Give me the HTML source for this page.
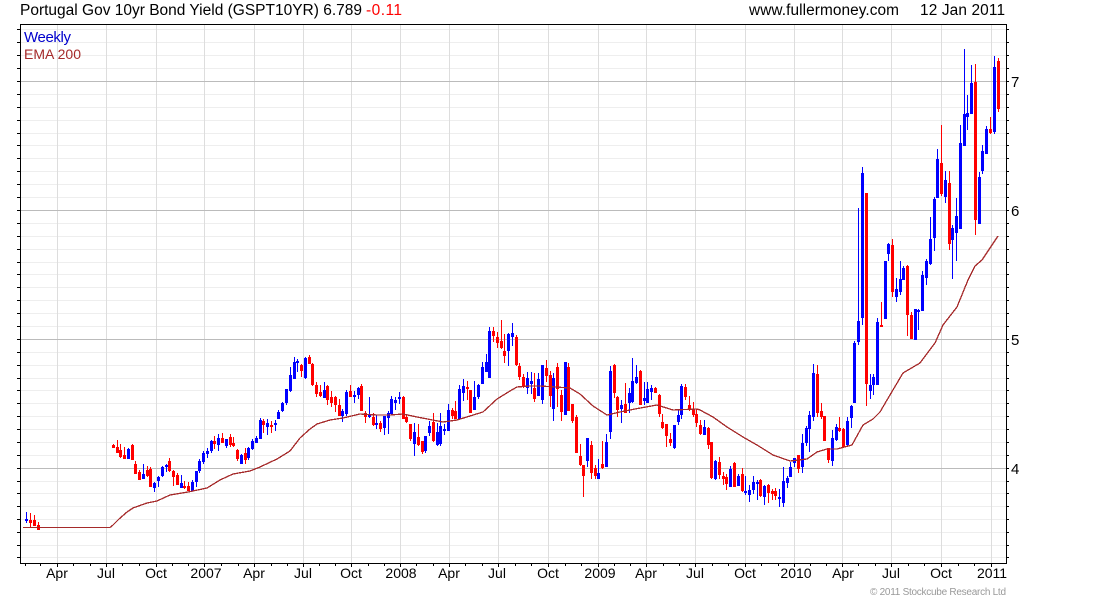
<!DOCTYPE html>
<html><head><meta charset="utf-8"><title>Portugal Gov 10yr Bond Yield</title>
<style>html,body{margin:0;padding:0;background:#fff;width:1100px;height:600px;overflow:hidden}svg{display:block}text{font-family:"Liberation Sans",Arial,sans-serif}</style></head>
<body>
<svg width="1100" height="600" viewBox="0 0 1100 600" xmlns="http://www.w3.org/2000/svg">
<g shape-rendering="crispEdges" fill="none">
<path stroke="#eeeeee" d="M20 29.5H1006M20 42.5H1006M20 55.5H1006M20 68.5H1006M20 94.5H1006M20 107.5H1006M20 120.5H1006M20 133.5H1006M20 145.5H1006M20 158.5H1006M20 171.5H1006M20 184.5H1006M20 197.5H1006M20 223.5H1006M20 236.5H1006M20 249.5H1006M20 262.5H1006M20 274.5H1006M20 287.5H1006M20 300.5H1006M20 313.5H1006M20 326.5H1006M20 352.5H1006M20 365.5H1006M20 378.5H1006M20 390.5H1006M20 403.5H1006M20 416.5H1006M20 429.5H1006M20 442.5H1006M20 455.5H1006M20 481.5H1006M20 493.5H1006M20 506.5H1006M20 519.5H1006M20 532.5H1006M20 545.5H1006M20 557.5H1006"/>
<path stroke="#dddddd" d="M57.5 25V563M106.5 25V563M156.5 25V563M204.5 25V563M254.5 25V563M303.5 25V563M351.5 25V563M400.5 25V563M449.5 25V563M498.5 25V563M548.5 25V563M598.5 25V563M646.5 25V563M695.5 25V563M745.5 25V563M794.5 25V563M842.5 25V563M891.5 25V563M941.5 25V563M991.5 25V563"/>
<path stroke="#bbbbbb" d="M20 81.5H1006M20 210.5H1006M20 339.5H1006M20 468.5H1006"/>
<path stroke="#0000ff" d="M26.5 512V523M128.5 448V459M143.5 464V479M154.5 482V492M158.5 476V487M162.5 466V477M166.5 464V472M181.5 475V488M192.5 480V491M196.5 471V487M199.5 459V473M203.5 451V464M207.5 448V458M211.5 440V453M218.5 434V451M226.5 439V448M241.5 454V464M248.5 447V460M252.5 439V450M256.5 436V443M260.5 418V439M267.5 419V435M275.5 420V431M278.5 410V419M282.5 402V412M286.5 389V405M290.5 367V392M294.5 357V379M297.5 359V372M305.5 357V379M324.5 382V398M342.5 409V422M346.5 390V416M354.5 391V403M358.5 387V399M369.5 397V418M376.5 415V429M384.5 416V435M388.5 411V434M391.5 396V415M395.5 397V410M399.5 392V404M414.5 423V456M425.5 436V453M429.5 421V436M437.5 423V446M440.5 413V446M444.5 424V435M448.5 404V431M459.5 385V420M463.5 379V401M474.5 381V410M478.5 384V399M482.5 362V384M486.5 354V372M489.5 327V378M508.5 333V366M512.5 323V346M527.5 372V394M531.5 372V394M538.5 373V396M542.5 365V404M553.5 373V421M565.5 362V415M587.5 438V467M598.5 459V479M606.5 434V467M610.5 366V439M621.5 400V423M629.5 388V413M632.5 358V403M636.5 365V384M644.5 382V405M647.5 382V403M651.5 385V400M674.5 425V449M678.5 409V425M681.5 384V419M704.5 420V435M715.5 460V480M730.5 466V487M738.5 474V486M745.5 476V495M749.5 485V502M753.5 476V494M757.5 480V500M764.5 485V505M779.5 489V507M783.5 467V507M787.5 476V488M790.5 462V477M794.5 458V467M802.5 434V473M806.5 426V446M809.5 411V452M813.5 364V421M832.5 430V466M836.5 424V441M847.5 417V446M851.5 405V428M854.5 341V403M858.5 208V345M862.5 167V325M870.5 374V399M873.5 374V395M877.5 318V385M885.5 261V319M888.5 243V261M896.5 278V302M900.5 261V295M903.5 266V280M915.5 309V340M918.5 309V330M922.5 271V311M926.5 259V285M930.5 217V265M934.5 197V251M937.5 149V198M945.5 171V203M952.5 225V279M956.5 198V261M960.5 125V229M964.5 49V146M967.5 95V130M971.5 65V114M979.5 172V224M982.5 145V174M986.5 126V154M994.5 56V134"/>
<path stroke="#0000ff" stroke-width="3" d="M26.5 519V521M128.5 449V459M143.5 474V479M154.5 483V488M158.5 477V481M162.5 467V476M166.5 465V467M181.5 483V488M192.5 482V491M196.5 471V482M199.5 461V471M203.5 453V462M207.5 451V454M211.5 441V451M218.5 438V445M226.5 439V446M241.5 455V464M248.5 448V458M252.5 441V449M256.5 438V443M260.5 420V439M267.5 423V427M275.5 423V425M278.5 412V419M282.5 403V411M286.5 389V403M290.5 375V391M294.5 362V379M297.5 361V363M305.5 358V378M324.5 390V398M342.5 411V416M346.5 392V414M354.5 395V397M358.5 388V395M369.5 415V417M376.5 423V425M384.5 416V428M388.5 413V418M391.5 399V414M395.5 400V403M399.5 397V399M414.5 432V444M425.5 436V451M429.5 426V433M437.5 432V445M440.5 426V444M444.5 429V431M448.5 410V431M459.5 389V419M463.5 386V393M474.5 397V410M478.5 385V397M482.5 367V384M486.5 362V372M489.5 331V378M508.5 334V351M512.5 333V337M527.5 378V388M531.5 381V384M538.5 379V396M542.5 365V400M553.5 378V409M565.5 362V415M587.5 438V461M598.5 473V479M606.5 442V467M610.5 371V432M621.5 405V409M629.5 393V403M632.5 381V402M636.5 377V383M644.5 398V401M647.5 389V403M651.5 388V392M674.5 425V448M678.5 415V422M681.5 386V415M704.5 427V435M715.5 461V479M730.5 469V487M738.5 476V486M745.5 491V493M749.5 490V495M753.5 482V490M757.5 482V484M764.5 486V497M779.5 497V499M783.5 481V503M787.5 478V483M790.5 467V477M794.5 458V463M802.5 443V467M806.5 428V443M809.5 415V429M813.5 373V417M832.5 438V461M836.5 427V440M847.5 421V445M851.5 406V418M854.5 343V403M858.5 321V342M862.5 173V318M870.5 385V391M873.5 377V385M877.5 322V385M885.5 261V319M888.5 244V254M896.5 289V297M900.5 279V292M903.5 268V280M915.5 309V340M918.5 310V312M922.5 275V311M926.5 261V278M930.5 239V264M934.5 199V238M937.5 159V198M945.5 180V197M952.5 228V240M956.5 216V233M960.5 143V229M964.5 114V146M967.5 113V117M971.5 83V114M979.5 177V224M982.5 151V171M986.5 129V154M994.5 67V132"/>
<path stroke="#ff0000" d="M30.5 513V527M34.5 515V526M38.5 522V530M113.5 444V448M117.5 440V453M120.5 444V458M124.5 447V459M132.5 444V460M135.5 461V474M139.5 470V480M147.5 466V477M150.5 467V487M169.5 458V472M173.5 470V486M177.5 473V485M184.5 481V489M188.5 482V491M214.5 436V449M222.5 433V443M230.5 434V447M233.5 437V447M237.5 449V461M245.5 448V464M263.5 419V433M271.5 421V433M301.5 364V377M309.5 355V364M312.5 363V386M316.5 382V397M320.5 385V397M327.5 385V405M331.5 391V407M335.5 396V412M339.5 399V416M350.5 385V397M361.5 384V411M365.5 411V423M373.5 413V426M380.5 421V432M403.5 396V419M406.5 415V423M410.5 424V441M418.5 424V446M422.5 441V454M433.5 413V442M452.5 408V419M455.5 401V419M467.5 381V400M470.5 390V413M493.5 327V342M497.5 332V348M501.5 320V349M504.5 334V363M516.5 335V366M519.5 363V380M523.5 374V388M534.5 373V402M546.5 360V382M550.5 371V407M557.5 363V407M561.5 390V421M568.5 363V411M572.5 404V423M576.5 415V453M580.5 444V466M583.5 465V497M591.5 441V479M595.5 465V479M602.5 441V469M614.5 364V398M617.5 396V417M625.5 383V413M640.5 370V405M655.5 387V393M659.5 394V417M662.5 414V429M666.5 424V447M670.5 433V446M685.5 384V400M689.5 396V411M693.5 402V417M696.5 409V427M700.5 420V435M708.5 427V449M711.5 442V479M719.5 457V479M723.5 472V485M726.5 474V490M734.5 462V487M742.5 468V492M760.5 479V497M768.5 484V503M772.5 489V500M775.5 488V500M798.5 455V473M817.5 365V417M821.5 403V419M824.5 416V441M828.5 448V463M839.5 417V432M843.5 428V448M866.5 193V406M881.5 302V327M892.5 239V297M907.5 265V336M911.5 312V339M941.5 125V196M949.5 171V250M975.5 64V235M990.5 117V134M998.5 58V112"/>
<path stroke="#ff0000" stroke-width="3" d="M30.5 520V523M34.5 520V526M38.5 525V530M113.5 445V448M117.5 447V453M120.5 450V457M124.5 455V459M132.5 445V460M135.5 464V474M139.5 472V480M147.5 470V476M150.5 469V487M169.5 461V471M173.5 471V477M177.5 475V485M184.5 486V488M188.5 486V491M214.5 441V444M222.5 438V443M230.5 437V445M233.5 443V446M237.5 450V459M245.5 453V460M263.5 421V425M271.5 425V427M301.5 365V371M309.5 357V364M312.5 364V385M316.5 385V394M320.5 392V396M327.5 386V400M331.5 397V403M335.5 397V405M339.5 405V416M350.5 391V397M361.5 386V411M365.5 413V417M373.5 417V425M380.5 423V429M403.5 397V419M406.5 417V422M410.5 424V439M418.5 437V445M422.5 441V452M433.5 422V441M452.5 410V416M455.5 411V419M467.5 387V389M470.5 390V413M493.5 331V336M497.5 337V343M501.5 341V348M504.5 351V356M516.5 337V365M519.5 366V377M523.5 377V387M534.5 388V399M546.5 368V376M550.5 375V396M557.5 367V389M561.5 395V412M568.5 367V411M572.5 404V421M576.5 417V453M580.5 456V465M583.5 465V476M591.5 445V473M595.5 468V476M602.5 464V468M614.5 365V393M617.5 397V410M625.5 404V413M640.5 371V405M655.5 388V393M659.5 395V414M662.5 422V428M666.5 424V436M670.5 439V443M685.5 387V397M689.5 405V410M693.5 409V415M696.5 414V423M700.5 425V434M708.5 428V445M711.5 442V478M719.5 462V475M723.5 476V479M726.5 477V484M734.5 463V487M742.5 474V491M760.5 480V496M768.5 485V493M772.5 491V494M775.5 491V496M798.5 455V469M817.5 374V413M821.5 411V417M824.5 416V441M828.5 448V460M839.5 428V431M843.5 429V447M866.5 193V384M881.5 325V327M892.5 245V292M907.5 266V315M911.5 315V339M941.5 163V194M949.5 183V244M975.5 82V220M990.5 129V133M998.5 61V109"/>
<path stroke="#000000" d="M20.5 24.5H1006.5V563.5H20.5Z"/>
<path stroke="#000000" d="M1006 29.5h3M1006 42.5h3M1006 55.5h3M1006 68.5h3M1006 81.5h3M1006 94.5h3M1006 107.5h3M1006 120.5h3M1006 133.5h3M1006 145.5h3M1006 158.5h3M1006 171.5h3M1006 184.5h3M1006 197.5h3M1006 210.5h3M1006 223.5h3M1006 236.5h3M1006 249.5h3M1006 262.5h3M1006 274.5h3M1006 287.5h3M1006 300.5h3M1006 313.5h3M1006 326.5h3M1006 339.5h3M1006 352.5h3M1006 365.5h3M1006 378.5h3M1006 390.5h3M1006 403.5h3M1006 416.5h3M1006 429.5h3M1006 442.5h3M1006 455.5h3M1006 468.5h3M1006 481.5h3M1006 493.5h3M1006 506.5h3M1006 519.5h3M1006 532.5h3M1006 545.5h3M1006 557.5h3"/>
<path stroke="#000000" d="M17 29.5h3M17 42.5h3M17 55.5h3M17 68.5h3M17 81.5h3M17 94.5h3M17 107.5h3M17 120.5h3M17 133.5h3M17 145.5h3M17 158.5h3M17 171.5h3M17 184.5h3M17 197.5h3M17 210.5h3M17 223.5h3M17 236.5h3M17 249.5h3M17 262.5h3M17 274.5h3M17 287.5h3M17 300.5h3M17 313.5h3M17 326.5h3M17 339.5h3M17 352.5h3M17 365.5h3M17 378.5h3M17 390.5h3M17 403.5h3M17 416.5h3M17 429.5h3M17 442.5h3M17 455.5h3M17 468.5h3M17 481.5h3M17 493.5h3M17 506.5h3M17 519.5h3M17 532.5h3M17 545.5h3M17 557.5h3"/>
<path stroke="#000000" d="M25.5 564v2M40.5 564v2M57.5 564v3M73.5 564v2M90.5 564v2M106.5 564v3M122.5 564v2M139.5 564v2M156.5 564v3M172.5 564v2M188.5 564v2M204.5 564v3M221.5 564v2M238.5 564v2M254.5 564v3M271.5 564v2M287.5 564v2M303.5 564v3M319.5 564v2M335.5 564v2M351.5 564v3M368.5 564v2M384.5 564v2M400.5 564v3M416.5 564v2M433.5 564v2M449.5 564v3M465.5 564v2M482.5 564v2M498.5 564v3M515.5 564v2M531.5 564v2M548.5 564v3M565.5 564v2M581.5 564v2M598.5 564v3M614.5 564v2M630.5 564v2M646.5 564v3M663.5 564v2M679.5 564v2M695.5 564v3M712.5 564v2M728.5 564v2M745.5 564v3M761.5 564v2M778.5 564v2M794.5 564v3M810.5 564v2M826.5 564v2M842.5 564v3M858.5 564v2M875.5 564v2M891.5 564v3M908.5 564v2M924.5 564v2M941.5 564v3M958.5 564v2M974.5 564v2M991.5 564v3"/>
</g>
<path fill="none" stroke="#a52a2a" stroke-width="1.3" shape-rendering="crispEdges" d="M23 527.5H110L113 525 119 519 127 512 133 508 147 503 157 501 170 495 188 492 207 488 220 480 233 474 250 471 260 467 277 459 290 451 300 438 310 429 317 424 330 420 343 418 360 414 377 415 390 415 403 414 417 417 443 422 457 420 470 416 483 412 497 399 510 391 517 387 530 386 540 386 570 388 580 394 593 406 607 415 620 412 635 409 657 405 673 410 697 409 700 410 713 417 727 427 743 437 757 445 773 455 790 461 807 459 817 452 827 449 837 449 852 445 863 425 873 419 880 412 887 400 903 373 920 363 935 343 943 325 957 307 968 280 975 266 982 260 998 236"/>
<text x="20" y="15" font-size="15.5" textLength="342" lengthAdjust="spacing" fill="#000">Portugal Gov 10yr Bond Yield (GSPT10YR) 6.789</text>
<text x="366" y="15" font-size="15.5" textLength="36" lengthAdjust="spacing" fill="#ff0000">-0.11</text>
<text x="749" y="15" font-size="15.4" textLength="150" lengthAdjust="spacing" fill="#000">www.fullermoney.com</text>
<text x="920" y="15" font-size="15.4" textLength="85" lengthAdjust="spacing" fill="#000">12 Jan 2011</text>
<text x="24" y="42" font-size="15" textLength="47" lengthAdjust="spacing" fill="#0000cc">Weekly</text>
<text x="24" y="59" font-size="14" textLength="57" lengthAdjust="spacing" fill="#a52a2a">EMA 200</text>
<g font-size="15" fill="#000">
<text x="1011" y="87">7</text><text x="1011" y="216">6</text><text x="1011" y="345">5</text><text x="1011" y="474">4</text>
</g>
<g font-size="14" fill="#000" text-anchor="middle">
<text x="57" y="578">Apr</text><text x="106" y="578">Jul</text><text x="156" y="578">Oct</text><text x="206" y="578">2007</text><text x="254" y="578">Apr</text><text x="303" y="578">Jul</text><text x="351" y="578">Oct</text><text x="401" y="578">2008</text><text x="449" y="578">Apr</text><text x="497" y="578">Jul</text><text x="548" y="578">Oct</text><text x="600" y="578">2009</text><text x="646" y="578">Apr</text><text x="695" y="578">Jul</text><text x="745" y="578">Oct</text><text x="796" y="578">2010</text><text x="843" y="578">Apr</text><text x="891" y="578">Jul</text><text x="941" y="578">Oct</text><text x="992" y="578">2011</text>
</g>
<text x="870" y="595" font-size="10" textLength="136" lengthAdjust="spacing" fill="#999">© 2011 Stockcube Research Ltd</text>
</svg>
</body></html>
